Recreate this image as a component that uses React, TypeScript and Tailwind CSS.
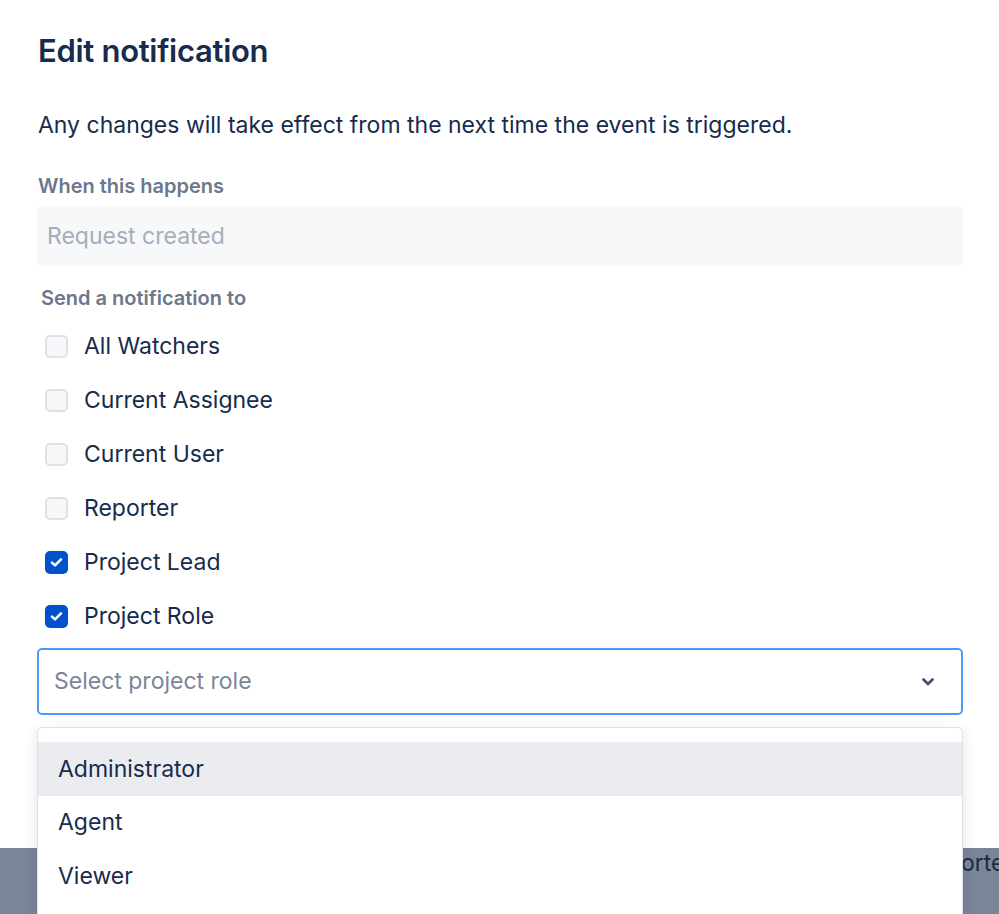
import React from "react";

const font = { fontFamily: "Inter, 'Noto Sans', 'Liberation Sans', sans-serif" };

function Box({ checked }: { checked: boolean }) {
  if (checked) {
    return (
      <span className="flex h-[23px] w-[23px] items-center justify-center rounded-[5px] bg-[#0052cc]">
        <svg width="13" height="11" viewBox="0 0 13 11" fill="none">
          <path d="M2 5.6 L5 8.4 L11 2.4" stroke="white" strokeWidth="2.6" strokeLinecap="round" strokeLinejoin="round" />
        </svg>
      </span>
    );
  }
  return <span className="block h-[23px] w-[23px] rounded-[5px] border-2 border-[#dfe1e6] bg-[#f7f8fa]" />;
}

const options: [string, boolean][] = [
  ["All Watchers", false],
  ["Current Assignee", false],
  ["Current User", false],
  ["Reporter", false],
  ["Project Lead", true],
  ["Project Role", true],
];

export default function App() {
  return (
    <div className="relative h-[914px] w-full overflow-hidden bg-[#7b8598]" style={font}>
      <span className="absolute left-[919px] top-[848px] whitespace-nowrap text-[23px] leading-[30px] text-[#1a2845]">Reporter</span>
      <div className="relative h-[848px] bg-white pl-[37px] pr-[36px] pt-[33px]">
        <h1 className="pl-[1px] text-[31px] font-semibold leading-[36px] tracking-[-0.3px] text-[#172b4d]">Edit notification</h1>
        <p className="mt-[42px] pl-[1px] text-[23px] leading-[28px] text-[#172b4d]">
          Any changes will take effect from the next time the event is triggered.
        </p>
        <div className="mt-[35px] pl-[1px] text-[20px] font-semibold leading-[24px] text-[#6b778c]">When this happens</div>
        <div className="mt-[8px] flex h-[60px] items-center rounded-[5px] bg-[#f7f8fa] px-[10px] text-[23px] text-[#a5adba]">
          Request created
        </div>
        <div className="mt-[20px] pl-[4px] text-[20px] font-semibold leading-[24px] text-[#6b778c]">Send a notification to</div>
        <div className="mt-[9px] flex flex-col">
          {options.map(([label, checked]) => (
            <div key={label} className="flex h-[54px] items-center pl-[8px]">
              <Box checked={checked} />
              <span className="ml-[16px] text-[23px] text-[#172b4d]">{label}</span>
            </div>
          ))}
        </div>
        <div className="relative mt-[5px]">
          <div className="flex h-[67px] items-center justify-between rounded-[5px] border-2 border-[#4c9aff] bg-white pl-[15px] pr-[26px]">
            <span className="text-[23px] text-[#7a869a]">Select project role</span>
            <svg width="14" height="10" viewBox="0 0 14 10" fill="none">
              <path d="M2.5 2.5 L7 7 L11.5 2.5" stroke="#42526e" strokeWidth="2.8" strokeLinecap="round" strokeLinejoin="round" />
            </svg>
          </div>
          <div className="absolute left-0 right-0 top-full z-10 mt-[12px] h-[200px] rounded-[5px] border border-[#e2e3e6] bg-white pt-[14px] shadow-[0_4px_14px_rgba(9,30,66,0.12)]">
            {["Administrator", "Agent", "Viewer"].map((r, i) => (
              <div
                key={r}
                className={`flex h-[53.5px] items-center pl-[20px] text-[23px] text-[#172b4d] ${i === 0 ? "bg-[#ebecf0]" : ""}`}
              >
                {r}
              </div>
            ))}
          </div>
        </div>
      </div>
    </div>
  );
}
